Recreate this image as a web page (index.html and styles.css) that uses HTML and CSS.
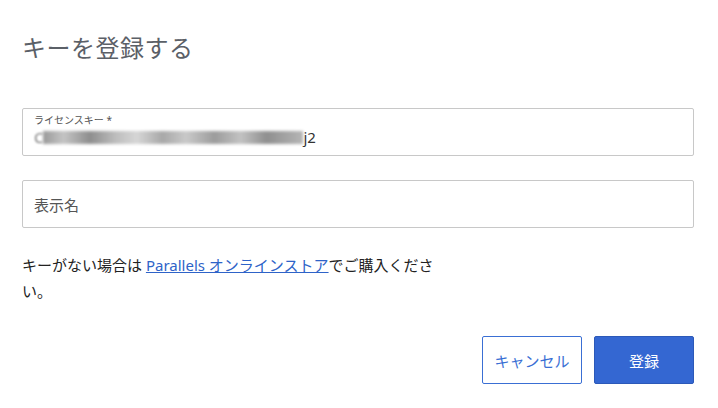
FILE: index.html
```html
<!DOCTYPE html>
<html lang="ja">
<head>
    <meta charset="UTF-8">
    <meta name="viewport" content="width=device-width, initial-scale=1.0">
    <title>キーを登録する</title>
    <link rel="stylesheet" href="styles.css">
</head>
<body>
    <div class="dialog">
        <h1 class="title">キーを登録する</h1>

        <div class="field field-filled">
            <label class="field-label" for="licenseKey">ライセンスキー *</label>
            <div class="field-value" id="licenseKey"><span class="blur-edge">C</span><span class="blur"></span><span>j2</span></div>
        </div>

        <div class="field">
            <span class="placeholder">表示名</span>
        </div>

        <p class="note">キーがない場合は <a href="#">Parallels オンラインストア</a>でご購入ください。</p>

        <div class="actions">
            <button type="button" class="btn btn-secondary">キャンセル</button>
            <button type="button" class="btn btn-primary">登録</button>
        </div>
    </div>
</body>
</html>
```

FILE: styles.css
```css
body {
    margin: 0;
    font-family: "Noto Sans", "Noto Sans CJK JP", sans-serif;
    background: #fff;
    color: #222;
}
.dialog {
    padding: 30px 24px 0 22px;
}
.title {
    margin: 0 0 42px;
    font-size: 24px;
    font-weight: 400;
    line-height: 36px;
    color: #5b6067;
    letter-spacing: 0.5px;
}
.field {
    box-sizing: border-box;
    height: 48px;
    border: 1px solid #c8c8c8;
    border-radius: 2px;
    padding: 0 11px;
    margin-bottom: 24px;
    display: flex;
    align-items: center;
}
.field-filled {
    flex-direction: column;
    align-items: flex-start;
    justify-content: flex-start;
    padding-top: 4px;
}
.field-label {
    font-size: 10px;
    line-height: 14px;
    color: #555;
}
.field-value {
    display: flex;
    align-items: center;
    height: 20px;
    font-size: 15px;
    color: #333;
}
.blur-edge {
    color: #777;
    filter: blur(0.8px);
}
.blur {
    display: inline-block;
    width: 260px;
    height: 13px;
    background: linear-gradient(90deg, #9a9a9a 0%, #c4c4c4 8%, #8e8e8e 18%, #bdbdbd 28%, #d6d6d6 36%, #a8a8a8 46%, #c9c9c9 55%, #9c9c9c 66%, #c2c2c2 76%, #8f8f8f 86%, #b5b5b5 100%);
    filter: blur(1.5px);
}
.placeholder {
    font-size: 15px;
    color: #555;
}
.note {
    width: 418px;
    margin: 0;
    font-size: 15px;
    line-height: 26px;
    color: #222;
}
.note a {
    color: #2e63c8;
    text-decoration: underline;
}
.actions {
    display: flex;
    justify-content: flex-end;
    gap: 12px;
    margin-top: 32px;
}
.btn {
    width: 100px;
    height: 48px;
    border-radius: 2px;
    font-family: inherit;
    font-size: 15px;
    cursor: pointer;
}
.btn-secondary {
    background: #fff;
    border: 1px solid #3a6fd4;
    color: #3a6fd4;
}
.btn-primary {
    background: #3467d2;
    border: 1px solid #2c59b8;
    color: #fff;
}
```
